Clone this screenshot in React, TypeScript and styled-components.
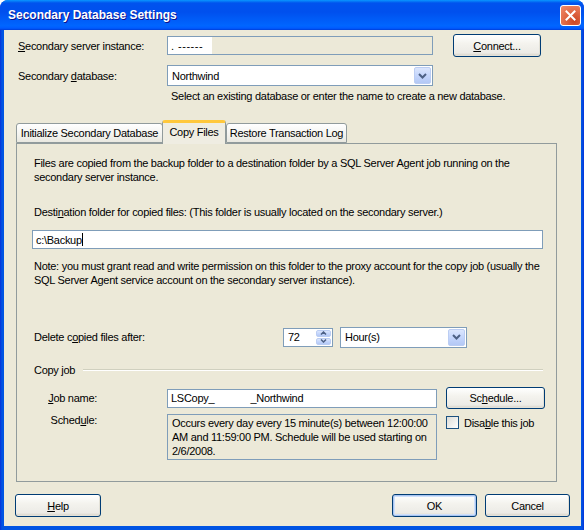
import React from 'react';
import styled, { createGlobalStyle } from 'styled-components';

const GlobalStyle = createGlobalStyle`
  html, body {
    margin: 0;
    padding: 0;
    background: #ffffff;
  }
  body {
    font-family: 'Liberation Sans', Arial, sans-serif;
    font-size: 11px;
    letter-spacing: -0.28px;
    color: #000;
  }
`;

const Window = styled.div`
  width: 584px;
  height: 530px;
  display: flex;
  flex-direction: column;
  background: linear-gradient(90deg, #0831d9 0px, #0054e3 2px, #0054e3 582px, #0831d9 584px);
  border-radius: 8px 8px 0 0;
  overflow: hidden;
`;

const TitleBar = styled.div`
  height: 30px;
  flex-shrink: 0;
  display: flex;
  align-items: center;
  justify-content: space-between;
  padding: 0 3px 0 8px;
  background: linear-gradient(
    180deg,
    #0997ff 0%,
    #0053ee 10%,
    #0050ee 40%,
    #0066ff 86%,
    #005bff 94%,
    #003dd7 100%
  );
`;

const Title = styled.span`
  color: #fff;
  font-family: 'Liberation Sans', Arial, sans-serif;
  font-weight: bold;
  font-size: 12px;
  letter-spacing: 0;
  transform: scaleY(1.08);
  text-shadow: 1px 1px 0 #0f1089;
`;

const CloseButton = styled.div`
  width: 19px;
  height: 19px;
  border: 1px solid #fff;
  border-radius: 3px;
  background: radial-gradient(circle at 70% 80%, #cc4622 0%, #e36d4a 55%, #f08b6b 100%);
  display: flex;
  align-items: center;
  justify-content: center;
`;

const Body = styled.div`
  flex: 1;
  margin: 0 3px 4px 4px;
  background: #ece9d8;
  padding: 4px 11px 0 14px;
  display: flex;
  flex-direction: column;
`;

const Row = styled.div<{ $top?: number; $height?: number }>`
  display: flex;
  align-items: center;
  margin-top: ${(p) => p.$top ?? 0}px;
  height: ${(p) => p.$height ?? 23}px;
`;

const Label = styled.span<{ $width: number; $right?: boolean }>`
  width: ${(p) => p.$width}px;
  flex-shrink: 0;
  text-align: ${(p) => (p.$right ? 'right' : 'left')};
  white-space: nowrap;
`;

const TextField = styled.div<{ $width: number; $readonly?: boolean; $left?: number }>`
  width: ${(p) => p.$width}px;
  height: 19px;
  box-sizing: border-box;
  border: 1px solid #7f9db9;
  background: ${(p) => (p.$readonly ? '#ece9d8' : '#fff')};
  margin-left: ${(p) => p.$left ?? 0}px;
  padding: 0 3px;
  display: flex;
  align-items: center;
  white-space: pre;
  flex-shrink: 0;
`;

const Redacted = styled.span`
  background: #fff;
  width: 41px;
  height: 17px;
  margin-left: -3px;
  padding-left: 3px;
  display: flex;
  align-items: center;
  letter-spacing: 0.5px;
`;

const Caret = styled.span`
  display: inline-block;
  width: 1px;
  height: 13px;
  background: #000;
`;

const Button = styled.div<{ $width: number; $height?: number; $default?: boolean; $left?: number }>`
  width: ${(p) => p.$width}px;
  height: ${(p) => p.$height ?? 23}px;
  margin-left: ${(p) => p.$left ?? 0}px;
  box-sizing: border-box;
  border: 1px solid #003c74;
  border-radius: 3px;
  background: linear-gradient(180deg, #ffffff 0%, #f4f3ee 40%, #ecebe6 85%, #d6d0c5 100%);
  box-shadow: ${(p) =>
    p.$default
      ? 'inset 0 0 0 1px #a8c4f0, inset 0 0 0 2px #cfe0fa'
      : 'inset -1px -1px 0 #e3e1d7'};
  display: flex;
  align-items: center;
  justify-content: center;
  flex-shrink: 0;
`;

const Combo = styled.div<{ $width: number; $left?: number }>`
  width: ${(p) => p.$width}px;
  height: 21px;
  margin-left: ${(p) => p.$left ?? 0}px;
  box-sizing: border-box;
  border: 1px solid #7f9db9;
  background: #fff;
  display: flex;
  align-items: stretch;
  padding: 1px;
  flex-shrink: 0;
`;

const ComboText = styled.span`
  flex: 1;
  display: flex;
  align-items: center;
  padding-left: 3px;
`;

const ArrowButton = styled.div`
  width: 17px;
  box-sizing: border-box;
  border: 1px solid #bbcdf3;
  border-radius: 2px;
  background: linear-gradient(180deg, #dbe6fd 0%, #c5d6fc 50%, #b3c8f5 100%);
  display: flex;
  align-items: center;
  justify-content: center;
`;

const Spin = styled.div`
  width: 50px;
  height: 19px;
  margin-left: 115px;
  box-sizing: border-box;
  border: 1px solid #7f9db9;
  background: #fff;
  display: flex;
  padding: 1px;
`;

const SpinButtons = styled.div`
  width: 15px;
  display: flex;
  flex-direction: column;
  gap: 1px;
`;

const SpinButton = styled(ArrowButton)`
  width: 15px;
  flex: 1;
`;

const Hint = styled.div`
  margin: 4px 0 0 153px;
  line-height: 13px;
`;

const TabStrip = styled.div`
  display: flex;
  align-items: flex-end;
  height: 23px;
  margin: 17px 0 0 -2px;
  position: relative;
  z-index: 1;
`;

const Tab = styled.div<{ $active?: boolean; $width: number }>`
  width: ${(p) => p.$width}px;
  height: ${(p) => (p.$active ? 24 : 20)}px;
  box-sizing: border-box;
  margin: ${(p) => (p.$active ? '0 -1px -1px -1px' : '0 0 0 1px')};
  border: 1px solid #919b9c;
  border-bottom: ${(p) => (p.$active ? 'none' : '1px solid #919b9c')};
  border-top: ${(p) => (p.$active ? '3px solid #ffc83c' : '1px solid #919b9c')};
  border-radius: 3px 3px 0 0;
  background: ${(p) =>
    p.$active ? '#efede2' : 'linear-gradient(180deg, #ffffff 0%, #f3f3ef 60%, #e9e8e0 100%)'};
  display: flex;
  align-items: center;
  justify-content: center;
  white-space: nowrap;
  padding-bottom: ${(p) => (p.$active ? 3 : 0)}px;

  &:first-child {
    margin-left: 0;
  }
`;

const Panel = styled.div`
  width: 541px;
  height: 339px;
  margin-left: -2px;
  box-sizing: border-box;
  border: 1px solid #919b9c;
  background: #ece9d8;
  padding: 12px 13px 0 17px;
  display: flex;
  flex-direction: column;
`;

const Para = styled.div<{ $top?: number }>`
  line-height: 14px;
  white-space: nowrap;
  margin-top: ${(p) => p.$top ?? 0}px;
`;

const GroupHeader = styled.div`
  display: flex;
  align-items: center;
  gap: 8px;
  margin-top: 16px;
  height: 13px;

  &::after {
    content: '';
    flex: 1;
    height: 1px;
    background: #d0d0bf;
    border-bottom: 1px solid #ffffff;
  }
`;

const ScheduleRow = styled.div`
  display: flex;
  align-items: flex-start;
  margin-top: 5px;
`;

const ScheduleBox = styled.div`
  width: 270px;
  height: 46px;
  margin-left: 70px;
  box-sizing: border-box;
  border: 1px solid #7f9db9;
  background: #ece9d8;
  padding: 1px 4px;
  line-height: 14px;
  white-space: nowrap;
  flex-shrink: 0;
`;

const CheckRow = styled.div`
  display: flex;
  align-items: center;
  gap: 5px;
  margin: 2px 0 0 9px;
`;

const CheckBox = styled.div`
  width: 13px;
  height: 13px;
  box-sizing: border-box;
  border: 1px solid #1c5180;
  background: linear-gradient(135deg, #dcdcd7 0%, #ffffff 100%);
`;

const Footer = styled.div`
  display: flex;
  align-items: center;
  margin: 12px 0 0 -3px;
  gap: 8px;
`;

const Spacer = styled.div`
  flex: 1;
`;

const Key = styled.span`
  text-decoration: underline;
`;

const Chevron = () => (
  <svg width="9" height="6" viewBox="0 0 9 6">
    <path d="M1 1 L4.5 4.5 L8 1" fill="none" stroke="#4d6185" strokeWidth="2" />
  </svg>
);

const SmallChevron: React.FC<{ up?: boolean }> = ({ up }) => (
  <svg width="7" height="4" viewBox="0 0 7 4">
    <path
      d={up ? 'M1 3.5 L3.5 1 L6 3.5' : 'M1 0.5 L3.5 3 L6 0.5'}
      fill="none"
      stroke="#4d6185"
      strokeWidth="1.5"
    />
  </svg>
);

const CloseIcon = () => (
  <svg width="11" height="11" viewBox="0 0 11 11">
    <path d="M1.5 1.5 L9.5 9.5 M9.5 1.5 L1.5 9.5" stroke="#fff" strokeWidth="2" strokeLinecap="square" />
  </svg>
);

export default function App() {
  return (
    <>
      <GlobalStyle />
      <Window>
        <TitleBar>
          <Title>Secondary Database Settings</Title>
          <CloseButton>
            <CloseIcon />
          </CloseButton>
        </TitleBar>
        <Body>
          <Row>
            <Label $width={149}>
              <Key>S</Key>econdary server instance:
            </Label>
            <TextField $width={266} $readonly>
              <Redacted>. ------</Redacted>
            </TextField>
            <Button $width={88} $left={20}>
              <span>
                <Key>C</Key>onnect...
              </span>
            </Button>
          </Row>
          <Row $top={8} $height={21}>
            <Label $width={149}>
              Secondary <Key>d</Key>atabase:
            </Label>
            <Combo $width={266}>
              <ComboText>Northwind</ComboText>
              <ArrowButton>
                <Chevron />
              </ArrowButton>
            </Combo>
          </Row>
          <Hint>Select an existing database or enter the name to create a new database.</Hint>
          <TabStrip>
            <Tab $width={147}>Initialize Secondary Database</Tab>
            <Tab $width={64} $active>
              Copy Files
            </Tab>
            <Tab $width={121}>Restore Transaction Log</Tab>
          </TabStrip>
          <Panel>
            <Para>
              Files are copied from the backup folder to a destination folder by a SQL Server Agent job running on the
              <br />
              secondary server instance.
            </Para>
            <Para $top={21}>
              Desti<Key>n</Key>ation folder for copied files: (This folder is usually located on the secondary server.)
            </Para>
            <Row $top={11} $height={19}>
              <TextField $width={511} $left={-2}>
                c:\Backup
                <Caret />
              </TextField>
            </Row>
            <Para $top={10}>
              Note: you must grant read and write permission on this folder to the proxy account for the copy job (usually the
              <br />
              SQL Server Agent service account on the secondary server instance).
            </Para>
            <Row $top={40} $height={20}>
              <Label $width={134}>
                Delete c<Key>o</Key>pied files after:
              </Label>
              <Spin>
                <ComboText>72</ComboText>
                <SpinButtons>
                  <SpinButton>
                    <SmallChevron up />
                  </SpinButton>
                  <SpinButton>
                    <SmallChevron />
                  </SpinButton>
                </SpinButtons>
              </Spin>
              <Combo $width={127} $left={7}>
                <ComboText>Hour(s)</ComboText>
                <ArrowButton>
                  <Chevron />
                </ArrowButton>
              </Combo>
            </Row>
            <GroupHeader>Copy job</GroupHeader>
            <Row $top={11} $height={22}>
              <Label $width={63} $right>
                <Key>J</Key>ob name:
              </Label>
              <TextField $width={270} $left={70}>
                LSCopy_             _Northwind
              </TextField>
              <Button $width={99} $height={22} $left={9}>
                <span>
                  Sc<Key>h</Key>edule...
                </span>
              </Button>
            </Row>
            <ScheduleRow>
              <Label $width={63} $right>
                Sched<Key>u</Key>le:
              </Label>
              <ScheduleBox>
                Occurs every day every 15 minute(s) between 12:00:00
                <br />
                AM and 11:59:00 PM. Schedule will be used starting on
                <br />
                2/6/2008.
              </ScheduleBox>
              <CheckRow>
                <CheckBox />
                <span>
                  Disa<Key>b</Key>le this job
                </span>
              </CheckRow>
            </ScheduleRow>
          </Panel>
          <Footer>
            <Button $width={86}>
              <span>
                <Key>H</Key>elp
              </span>
            </Button>
            <Spacer />
            <Button $width={85} $default>
              OK
            </Button>
            <Button $width={85}>Cancel</Button>
          </Footer>
        </Body>
      </Window>
    </>
  );
}
